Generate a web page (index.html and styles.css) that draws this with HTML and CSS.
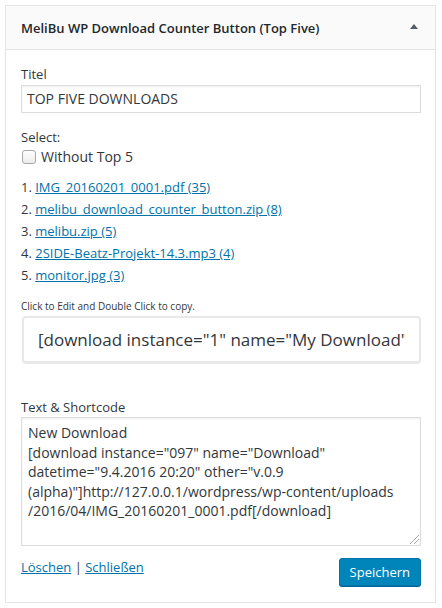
FILE: index.html
```html
<!DOCTYPE html>
<html>
<head>
<meta charset="utf-8">
<link rel="stylesheet" href="styles.css">
</head>
<body>
<div class="widget">
  <div class="widget-top">
    <h3 class="widget-title">MeliBu WP Download Counter Button (Top Five)</h3>
    <span class="toggle"></span>
  </div>
  <div class="widget-inside">
    <label class="lbl">Titel</label>
    <div class="input">TOP FIVE DOWNLOADS</div>

    <div class="lbl select">Select:</div>
    <label class="check"><span class="box"></span>Without Top 5</label>

    <ol class="top">
      <li>1. <a href="#">IMG_20160201_0001.pdf (35)</a></li>
      <li>2. <a href="#">melibu_download_counter_button.zip (8)</a></li>
      <li>3. <a href="#">melibu.zip (5)</a></li>
      <li>4. <a href="#">2SIDE-Beatz-Projekt-14.3.mp3 (4)</a></li>
      <li>5. <a href="#">monitor.jpg (3)</a></li>
    </ol>

    <div class="hint">Click to Edit and Double Click to copy.</div>
    <div class="shortcode"><div class="clip">[download instance="1" name="My Download" datetime="9.4.2016 20:20"]</div></div>

    <div class="lbl text-lbl">Text &amp; Shortcode</div>
    <div class="textarea">New Download<br>[download instance="097" name="Download"<br>datetime="9.4.2016 20:20" other="v.0.9<br>(alpha)"]http://127.0.0.1/wordpress/wp-content/uploads<br>/2016/04/IMG_20160201_0001.pdf[/download]<span class="grip"></span></div>

    <div class="actions">
      <div class="links"><a href="#">Löschen</a> | <a href="#">Schließen</a></div>
      <button class="btn">Speichern</button>
    </div>
  </div>
</div>
</body>
</html>
```
FILE: styles.css
```css
* { box-sizing: border-box; }
body {
  margin: 0;
  background: #fff;
  font-family: "Open Sans", "Liberation Sans", sans-serif;
  font-size: 14px;
  color: #32373c;
}
.widget {
  margin: 5px 6px 0 5px;
  border: 1px solid #e5e5e5;
  box-shadow: 0 1px 1px rgba(0,0,0,.04);
  background: #fff;
  height: 598px;
}
.widget-top {
  height: 44px;
  background: #fafafa;
  border-bottom: 1px solid #e5e5e5;
  display: flex;
  align-items: center;
  justify-content: space-between;
  padding: 0 17px 0 15px;
}
.widget-title {
  margin: 0;
  font-size: 13px;
  font-weight: 600;
  color: #23282d;
}
.toggle {
  width: 0; height: 0;
  border-left: 4px solid transparent;
  border-right: 4px solid transparent;
  border-bottom: 5px solid #555d66;
  margin-top: -2px;
}
.widget-inside {
  padding: 15px 14px 0 15px;
}
.lbl {
  display: block;
  line-height: 19px;
  font-size: 13px;
  color: #32373c;
}
.input {
  margin-top: 1px;
  height: 28px;
  border: 1px solid #ddd;
  box-shadow: inset 0 1px 2px rgba(0,0,0,.07);
  padding: 0 5px;
  line-height: 26px;
  font-size: 14px;
  color: #32373c;
}
.select { margin-top: 15px; }
.check {
  display: flex;
  align-items: center;
  gap: 5px;
  margin-top: 0;
  line-height: 20px;
  font-size: 14px;
}
.box {
  width: 14px; height: 14px;
  margin-left: 1px;
  border: 1px solid #a8a8a8;
  border-radius: 3px;
  background: linear-gradient(#fff, #ececec);
}
.top {
  list-style: none;
  margin: 9px 0 0;
  padding: 0;
}
.top li {
  line-height: 22px;
  font-size: 13px;
}
a { color: #0073aa; text-decoration: underline; }
.hint {
  margin-top: 13px;
  font-size: 10px;
  line-height: 14px;
}
.shortcode {
  margin: 3px 0 0 1px;
  height: 48px;
  border: 2px solid #e8e8e8;
  border-bottom-width: 3px;
  border-radius: 4px;
  padding: 0 14px;
  display: flex;
  align-items: center;
}
.clip {
  overflow: hidden;
  white-space: nowrap;
  font-size: 17px;
  width: 368px;
  color: #32373c;
}
.text-lbl { margin-top: 34px; }
.textarea {
  position: relative;
  margin-top: 0;
  height: 129px;
  border: 1px solid #ddd;
  box-shadow: inset 0 1px 2px rgba(0,0,0,.07);
  padding: 5px 6px;
  font-size: 14px;
  line-height: 19.6px;
  color: #32373c;
}
.grip {
  position: absolute;
  right: 1px; bottom: 1px;
  width: 9px; height: 9px;
  background: linear-gradient(135deg, transparent 45%, #aaa 45%, #aaa 52%, transparent 52%, transparent 68%, #aaa 68%, #aaa 75%, transparent 75%);
}
.actions {
  margin-top: 10px;
  display: flex;
  justify-content: space-between;
  align-items: flex-start;
}
.links {
  margin-top: 2px;
  font-size: 13px;
  line-height: 18px;
}
.btn {
  height: 28px;
  padding: 0 10px 1px;
  background: #0085ba;
  border: 1px solid #0073aa;
  border-radius: 3px;
  box-shadow: 0 1px 0 #006799;
  color: #fff;
  font-family: inherit;
  font-size: 13px;
  line-height: 26px;
  margin-top: 2px;
}
```
